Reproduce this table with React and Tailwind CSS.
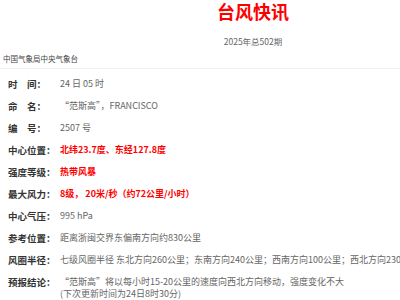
export default function App() {
  const font = { fontFamily: '"Noto Sans CJK SC", "Noto Sans", sans-serif' };
  const rows = [
    { label: "时　间：", value: "24 日 05 时" },
    { label: "命　名：", value: " “范斯高”，FRANCISCO" },
    { label: "编　号：", value: "2507 号" },
    { label: "中心位置：", value: "北纬23.7度、东经127.8度", red: true },
    { label: "强度等级：", value: "热带风暴", red: true },
    { label: "最大风力：", value: "8级， 20米/秒（约72公里/小时）", red: true },
    { label: "中心气压：", value: "995 hPa" },
    { label: "参考位置：", value: "距离浙闽交界东偏南方向约830公里" },
    { label: "风圈半径：", value: "七级风圈半径 东北方向260公里；东南方向240公里；西南方向100公里；西北方向230公里" },
  ];
  return (
    <div className="w-[506px] bg-white text-[#555]" style={font}>
      <div className="pt-[1px] text-center">
        <div className="text-[18px] leading-[20px] font-bold text-[#ff0000]">台风快讯</div>
        <div className="mt-[15px] text-[8.5px] leading-[10px] text-[#666]">2025年总502期</div>
      </div>
      <div className="mt-[8px] px-[3px] pb-[4px] text-[7.5px] leading-[10px] text-[#444] border-b border-[#f2f2f2]">中国气象局中央气象台</div>
      <div className="mt-[4px] pl-[8px]">
        {rows.map((r) => (
          <div key={r.label} className="flex h-[22px] items-center whitespace-nowrap">
            <div className="w-[52px] shrink-0 text-[9.5px] font-bold text-[#333]">{r.label}</div>
            <div className={r.red ? "text-[9px] font-bold text-[#ff0000]" : "text-[9px] text-[#666]"}>{r.value}</div>
          </div>
        ))}
        <div className="flex pt-[5px] whitespace-nowrap">
          <div className="w-[52px] shrink-0 text-[9.5px] leading-[12px] font-bold text-[#333]">预报结论：</div>
          <div className="text-[9px] leading-[12px] text-[#666]">
            <div> “范斯高”将以每小时15-20公里的速度向西北方向移动，强度变化不大</div>
            <div>(下次更新时间为24日8时30分)</div>
          </div>
        </div>
      </div>
    </div>
  );
}
